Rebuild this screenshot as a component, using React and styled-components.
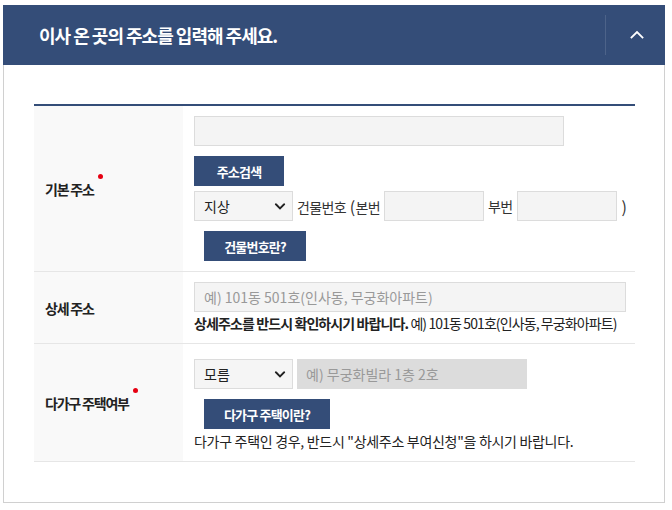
import React from 'react';
import styled, { createGlobalStyle } from 'styled-components';

const GlobalStyle = createGlobalStyle`
  * { box-sizing: border-box; }
  body {
    margin: 0;
    background: #fff;
    font-family: "Noto Sans CJK KR", "Noto Sans", sans-serif;
    color: #333;
  }
`;

const NAVY = '#344d78';

const Chevron = ({ up }) => (
  <svg width="14" height="9" viewBox="0 0 14 9" fill="none">
    <path
      d={up ? 'M1.5 7.5 L7 2 L12.5 7.5' : 'M1.5 1.5 L7 7 L12.5 1.5'}
      stroke={up ? '#fff' : '#222'}
      strokeWidth={up ? 1.8 : 2.6}
      strokeLinecap="square"
    />
  </svg>
);

const App = () => {
  return (
    <>
      <GlobalStyle />
      <Panel>
        <Header>
          <Title>이사 온 곳의 주소를 입력해 주세요.</Title>
          <Toggle>
            <Chevron up />
          </Toggle>
        </Header>
        <Body>
          <Table>
            <Row>
              <Label>
                기본 주소<Required />
              </Label>
              <Cell $top={10}>
                <TextInput $width={370} />
                <NavyButton $width={90}>주소검색</NavyButton>
                <Line>
                  <SelectBox>
                    <Select defaultValue="지상">
                      <option>지상</option>
                      <option>지하</option>
                    </Select>
                    <SelectArrow>
                      <Chevron />
                    </SelectArrow>
                  </SelectBox>
                  <Words>건물번호 <Paren>(</Paren>본번</Words>
                  <TextInput $width={100} />
                  <Words>부번</Words>
                  <TextInput $width={100} />
                  <Words><Paren>)</Paren></Words>
                </Line>
                <NavyButton $width={102} $indent>건물번호란?</NavyButton>
              </Cell>
            </Row>
            <Row>
              <Label>상세 주소</Label>
              <Cell $top={10}>
                <TextInput $width={432} placeholder="예) 101동 501호(인사동, 무궁화아파트)" />
                <Note>
                  <strong>상세주소를 반드시 확인하시기 바랍니다.</strong> 예) 101동 501호(인사동, 무궁화아파트)
                </Note>
              </Cell>
            </Row>
            <Row>
              <Label>
                다가구 주택여부<Required />
              </Label>
              <Cell $top={15}>
                <Line>
                  <SelectBox>
                    <Select defaultValue="모름">
                      <option>모름</option>
                      <option>예</option>
                      <option>아니오</option>
                    </Select>
                    <SelectArrow>
                      <Chevron />
                    </SelectArrow>
                  </SelectBox>
                  <TextInput $width={230} $disabled disabled placeholder="예) 무궁화빌라 1층 2호" />
                </Line>
                <NavyButton $width={126} $indent>다가구 주택이란?</NavyButton>
                <Note $plain>다가구 주택인 경우, 반드시 "상세주소 부여신청"을 하시기 바랍니다.</Note>
              </Cell>
            </Row>
          </Table>
        </Body>
      </Panel>
    </>
  );
};

export default App;

const Panel = styled.div`
  margin: 5px 0 0 3px;
  width: 662px;
  height: 498px;
  border: 1px solid #d0d0d0;
  border-top: none;
  background: #fff;
`;

const Header = styled.div`
  height: 60px;
  margin: 0 -1px;
  background: ${NAVY};
  display: flex;
  align-items: center;
  justify-content: space-between;
  padding-left: 36px;
`;

const Title = styled.h2`
  margin: 0;
  color: #fff;
  font-size: 18px;
  font-weight: 700;
  letter-spacing: -1px;
`;

const Toggle = styled.div`
  width: 60px;
  height: 40px;
  border-left: 1px solid #4d6389;
  display: flex;
  align-items: center;
  justify-content: center;
  padding: 0 0 2px 3px;
`;

const Body = styled.div`
  padding: 39px 29px 0 30px;
`;

const Table = styled.div`
  border-top: 2px solid ${NAVY};
`;

const Row = styled.div`
  display: flex;
  border-bottom: 1px solid #e6e6e6;
`;

const Label = styled.div`
  width: 149px;
  flex-shrink: 0;
  background: #f9f9f9;
  display: flex;
  align-items: center;
  padding-left: 11px;
  font-size: 14px;
  font-weight: 700;
  letter-spacing: -1.2px;
  color: #222;
`;

const Required = styled.span`
  display: inline-block;
  width: 5px;
  height: 5px;
  border-radius: 50%;
  background: #e60012;
  margin-left: 4px;
  align-self: flex-start;
  position: relative;
  top: calc(50% - 15px);
`;

const Cell = styled.div`
  flex: 1;
  padding: ${p => p.$top}px 0 10px 11px;
  display: flex;
  flex-direction: column;
  align-items: flex-start;
`;

const TextInput = styled.input`
  width: ${p => p.$width}px;
  height: 30px;
  flex-shrink: 0;
  border: ${p => (p.$disabled ? 'none' : '1px solid #dcdcdc')};
  background: ${p => (p.$disabled ? '#dcdcdc' : '#f4f4f4')};
  padding: 0 9px;
  font-family: inherit;
  font-size: 14px;
  color: #333;
  outline: none;
  &::placeholder { color: #999; }
`;

const NavyButton = styled.button`
  width: ${p => p.$width}px;
  height: 30px;
  margin: 10px 0 ${p => (p.$indent ? 0 : 5)}px ${p => (p.$indent ? 10 : 0)}px;
  border: none;
  background: ${NAVY};
  color: #fff;
  font-family: inherit;
  font-size: 13px;
  font-weight: 700;
  letter-spacing: -0.8px;
`;

const Line = styled.div`
  display: flex;
  align-items: center;
  gap: 4px;
`;

const SelectBox = styled.div`
  position: relative;
  width: 99px;
  height: 30px;
`;

const Select = styled.select`
  appearance: none;
  width: 100%;
  height: 100%;
  border: 1px solid #dcdcdc;
  background: #f5f5f5;
  padding: 0 9px;
  font-family: inherit;
  font-size: 14px;
  color: #222;
  outline: none;
`;

const SelectArrow = styled.span`
  position: absolute;
  right: 6px;
  top: 11px;
  display: flex;
  pointer-events: none;
  transform: scale(0.75);
`;

const Words = styled.span`
  font-size: 14px;
  color: #333;
  letter-spacing: -0.6px;
  white-space: nowrap;
`;

const Paren = styled.span`
  font-size: 16px;
  margin: 0 1px;
`;

const Note = styled.p`
  margin: ${p => (p.$plain ? 3 : 2)}px 0 0;
  font-size: 14px;
  line-height: 19px;
  color: #222;
  letter-spacing: ${p => (p.$plain ? '-0.3px' : '-0.9px')};
  strong { font-weight: 700; }
`;
